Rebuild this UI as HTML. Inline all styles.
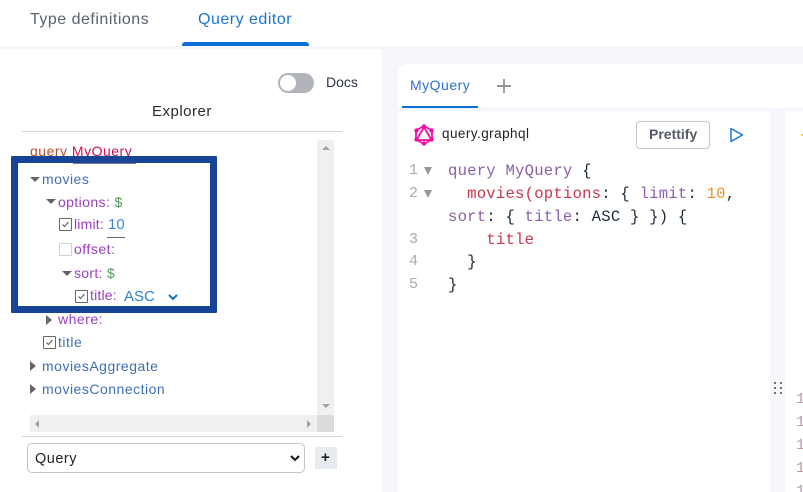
<!DOCTYPE html>
<html style="height:492px;overflow:hidden"><head><meta charset="utf-8"><style>
html,body{margin:0;padding:0}
body{width:803px;height:492px;overflow:hidden;background:#f4f6fb;position:relative;font-family:"Liberation Sans",sans-serif}
#w{position:absolute;left:0;top:0;width:803px;height:492px;overflow:hidden}
.a,.t{position:absolute}
.t{white-space:pre;line-height:20px;font-size:14px;letter-spacing:.5px}
.b{color:#3f6fb3}.p{color:#9a3fc0}.g{color:#4f9a5a}
.m{font-family:"Liberation Mono",monospace;font-size:15.6px;color:#1b2b3a;line-height:22px;letter-spacing:.22px}
.n{font-family:"Liberation Mono",monospace;font-size:15px;color:#a9a9a9;line-height:22px;letter-spacing:0}
.cb{position:absolute;width:11px;height:11px;border:1px solid #666;border-radius:1px;background:#fff}
.cb svg{position:absolute;left:1px;top:1px}
.tri{position:absolute;width:0;height:0}
.d{border-left:5px solid transparent;border-right:5px solid transparent;border-top:5px solid #666}
.r{border-top:5px solid transparent;border-bottom:5px solid transparent;border-left:6px solid #666}
.q{color:#8b5fa8}.e{color:#c9354f}
</style></head><body><div id="w">
<!-- top bar -->
<div class="a" style="left:0;top:0;width:803px;height:46px;background:#fff"></div>
<div class="t" style="left:30px;top:10px;font-size:16px;color:#5a6270">Type definitions</div>
<div class="t" style="left:198px;top:10px;font-size:16px;color:#1a73d9">Query editor</div>
<div class="a" style="left:182px;top:42px;width:127px;height:4px;background:#0b70d6;border-radius:3px 3px 0 0"></div>
<!-- left panel -->
<div class="a" style="left:0;top:49px;width:382px;height:443px;background:#fff"></div>
<div class="a" style="left:278px;top:73px;width:36px;height:20px;border-radius:10px;background:#b1b4b9"></div>
<div class="a" style="left:280px;top:75px;width:16px;height:16px;border-radius:50%;background:#fff"></div>
<div class="t" style="left:326px;top:72px;font-size:14px;letter-spacing:0;color:#2b3440">Docs</div>
<div class="t" style="left:152px;top:102px;font-size:15px;color:#2b2b2b">Explorer</div>
<div class="a" style="left:22px;top:131px;width:320px;height:1px;background:#d4d4d4"></div>
<!-- scrollbars -->
<div class="a" style="left:317px;top:140px;width:17px;height:292px;background:#f0f0f0"></div>
<div class="a" style="left:30px;top:415px;width:287px;height:17px;background:#f0f0f0"></div>
<div class="a" style="left:317px;top:415px;width:17px;height:17px;background:#dcdcdc"></div>
<div class="tri" style="left:322px;top:146px;border-left:4px solid transparent;border-right:4px solid transparent;border-bottom:4px solid #a3a3a3"></div>
<div class="tri" style="left:322px;top:404px;border-left:4px solid transparent;border-right:4px solid transparent;border-top:4px solid #a3a3a3"></div>
<div class="tri" style="left:35px;top:420px;border-top:4px solid transparent;border-bottom:4px solid transparent;border-right:4px solid #a3a3a3"></div>
<div class="tri" style="left:307px;top:420px;border-top:4px solid transparent;border-bottom:4px solid transparent;border-left:4px solid #a3a3a3"></div>
<!-- tree -->
<div class="t" style="left:30px;top:141px"><span style="color:#b5502a">query </span><span style="color:#d0104f">MyQuery</span></div>
<div class="tri d" style="left:30px;top:177px"></div>
<div class="t b" style="left:42px;top:169px">movies</div>
<div class="tri d" style="left:46px;top:199px"></div>
<div class="t p" style="left:58px;top:192px;letter-spacing:.4px">options: <span class="g">$</span></div>
<div class="cb" style="left:59px;top:218px"><svg width="9" height="9" viewBox="0 0 9 9"><path d="M1.5 4.5L3.5 6.5L7.5 2" fill="none" stroke="#666" stroke-width="1.2"/></svg></div>
<div class="t p" style="left:74px;top:214px;letter-spacing:.2px">limit:</div>
<div class="t" style="left:108px;top:215px;font-size:15px;letter-spacing:0;color:#3b82e0">10</div>
<div class="a" style="left:107px;top:237px;width:18px;height:1px;background:#666"></div>
<div class="cb" style="left:59px;top:243px;border-color:#d0d0d0"></div>
<div class="t p" style="left:74px;top:239px">offset:</div>
<div class="tri d" style="left:62px;top:271px"></div>
<div class="t p" style="left:74px;top:263px;letter-spacing:.3px">sort: <span class="g">$</span></div>
<div class="cb" style="left:75px;top:290px"><svg width="9" height="9" viewBox="0 0 9 9"><path d="M1.5 4.5L3.5 6.5L7.5 2" fill="none" stroke="#666" stroke-width="1.2"/></svg></div>
<div class="t p" style="left:90px;top:285px;letter-spacing:.2px">title:</div>
<div class="t" style="left:124px;top:287px;color:#2a80d0;font-size:15px;letter-spacing:0">ASC</div>
<svg class="a" style="left:168px;top:294px" width="10" height="7" viewBox="0 0 10 7"><path d="M1 1L5 5L9 1" fill="none" stroke="#0b70c6" stroke-width="2"/></svg>
<div class="tri r" style="left:46px;top:315px"></div>
<div class="t p" style="left:58px;top:309px">where:</div>
<div class="cb" style="left:43px;top:336px"><svg width="9" height="9" viewBox="0 0 9 9"><path d="M1.5 4.5L3.5 6.5L7.5 2" fill="none" stroke="#666" stroke-width="1.2"/></svg></div>
<div class="t b" style="left:58px;top:332px">title</div>
<div class="tri r" style="left:30px;top:361px"></div>
<div class="t b" style="left:42px;top:356px">moviesAggregate</div>
<div class="tri r" style="left:30px;top:384px"></div>
<div class="t b" style="left:42px;top:379px">moviesConnection</div>
<!-- highlight box -->
<div class="a" style="left:11px;top:156px;width:192px;height:143px;border:7px solid #174496;border-radius:1px"></div>
<div class="a" style="left:73px;top:163px;width:63px;height:1px;background:#77808e"></div>
<!-- bottom -->
<div class="a" style="left:22px;top:436px;width:320px;height:1px;background:#d4d4d4"></div>
<div class="a" style="left:27px;top:443px;width:276px;height:28px;border:1px solid #c4c4c8;border-radius:5px;background:#fff"></div>
<div class="t" style="left:35px;top:449px;font-size:14.5px;color:#222">Query</div>
<svg class="a" style="left:290px;top:455px" width="10" height="7" viewBox="0 0 10 7"><path d="M1 1L5 5L9 1" fill="none" stroke="#111" stroke-width="2"/></svg>
<div class="a" style="left:315px;top:447px;width:22px;height:22px;background:#e7ebf0"></div>
<div class="t" style="left:321px;top:448px;font-size:15px;font-weight:bold;letter-spacing:0;color:#222">+</div>
<!-- right panel -->
<div class="a" style="left:398px;top:64px;width:405px;height:44px;background:#fff;border-radius:10px 0 0 0"></div>
<div class="t" style="left:410px;top:75px;font-size:14px;color:#2a72d8">MyQuery</div>
<div class="a" style="left:402px;top:106px;width:76px;height:2px;background:#0b70d6"></div>
<svg class="a" style="left:497px;top:79px" width="14" height="14" viewBox="0 0 14 14"><path d="M7 0V14M0 7H14" stroke="#777" stroke-width="1.4"/></svg>
<div class="a" style="left:398px;top:111px;width:372px;height:381px;background:#fff"></div>
<div class="a" style="left:785px;top:111px;width:18px;height:381px;background:#fff"></div>
<svg class="a" style="left:414px;top:124px" width="20" height="22" viewBox="0 0 20 22">
<path d="M10 3L17.500 16H2.500ZM10 2L2 6.500V15.500L10 20L18 15.500V6.500Z" fill="none" stroke="#f010a8" stroke-width="1.800"/>
<g fill="#f010a8"><circle cx="10" cy="2.500" r="2.200"/><circle cx="2.500" cy="6.500" r="2.200"/><circle cx="17.500" cy="6.500" r="2.200"/><circle cx="2.500" cy="15.500" r="2.200"/><circle cx="17.500" cy="15.500" r="2.200"/><circle cx="10" cy="19.500" r="2.200"/></g></svg>
<div class="t" style="left:442px;top:124px;font-size:13.5px;letter-spacing:.45px;color:#222">query.graphql</div>
<div class="a" style="left:636px;top:121px;width:72px;height:26px;border:1px solid #c4c6ca;border-radius:4px;background:#fff"></div>
<div class="t" style="left:649px;top:124px;font-size:14px;font-weight:bold;letter-spacing:0;color:#555b64">Prettify</div>
<svg class="a" style="left:729px;top:127px" width="15" height="16" viewBox="0 0 15 16"><path d="M2 1.500L13.500 8L2 14.500Z" fill="none" stroke="#1a78dc" stroke-width="1.500" stroke-linejoin="round"/></svg>
<!-- code -->
<div class="t n" style="left:409px;top:160px">1</div>
<div class="tri" style="left:424px;top:167px;border-left:4.500px solid transparent;border-right:4.500px solid transparent;border-top:8px solid #999"></div>
<div class="t n" style="left:409px;top:183px">2</div>
<div class="tri" style="left:424px;top:190px;border-left:4.500px solid transparent;border-right:4.500px solid transparent;border-top:8px solid #999"></div>
<div class="t n" style="left:409px;top:229px">3</div>
<div class="t n" style="left:409px;top:251px">4</div>
<div class="t n" style="left:409px;top:274px">5</div>
<div class="t m" style="left:448px;top:160px"><span class="q">query MyQuery</span> {</div>
<div class="t m" style="left:448px;top:183px">  <span class="e">movies(options</span>: { <span class="q">limit</span>: <span style="color:#f08a24">10</span>,</div>
<div class="t m" style="left:448px;top:206px"><span class="q">sort</span>: { <span class="q">title</span>: ASC } }) {</div>
<div class="t m" style="left:448px;top:229px">    <span class="e">title</span></div>
<div class="t m" style="left:448px;top:251px">  }</div>
<div class="t m" style="left:448px;top:274px">}</div>
<!-- divider dots -->
<svg class="a" style="left:773px;top:381px" width="10" height="15"><g fill="#6b6f78"><rect x="1" y="1" width="2" height="2"/><rect x="7" y="1" width="2" height="2"/><rect x="1" y="6" width="2" height="2"/><rect x="7" y="6" width="2" height="2"/><rect x="1" y="11" width="2" height="2"/><rect x="7" y="11" width="2" height="2"/></g></svg>
<!-- right pane fragments -->
<div class="t n" style="left:796px;top:389px;color:#c49a9a">1</div>
<div class="t n" style="left:796px;top:412px;color:#c49a9a">1</div>
<div class="t n" style="left:796px;top:435px;color:#c49a9a">1</div>
<div class="t n" style="left:796px;top:458px;color:#c49a9a">1</div>
<div class="t n" style="left:796px;top:481px;color:#c49a9a">1</div>
<div class="a" style="left:802px;top:134px;width:1px;height:2px;background:#f0a020"></div>
</div></body></html>
